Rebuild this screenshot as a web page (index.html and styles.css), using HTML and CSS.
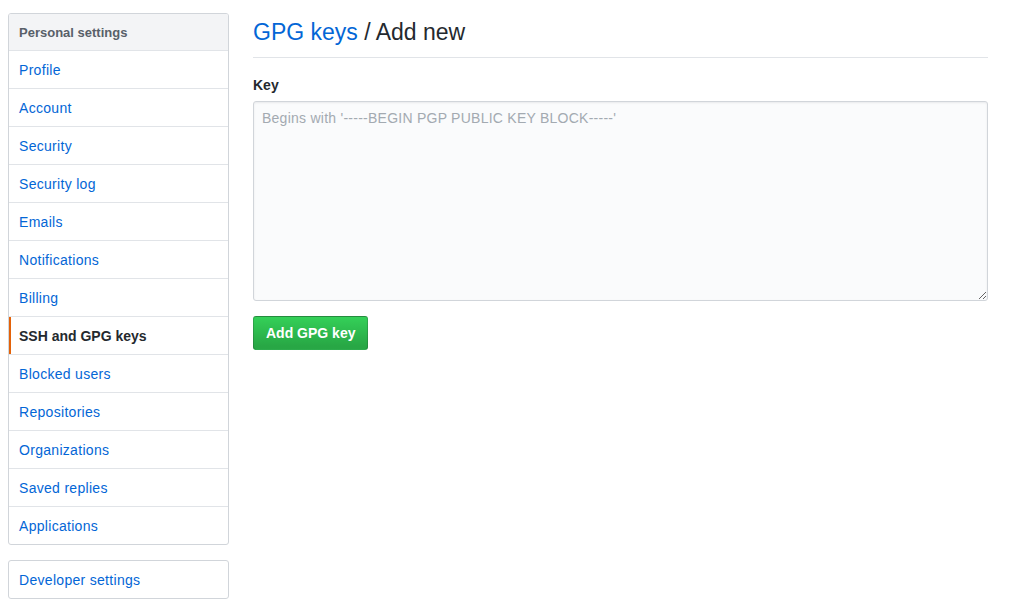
FILE: index.html
```html
<!DOCTYPE html>
<html lang="en">
<head>
<meta charset="utf-8">
<title>GPG keys / Add new</title>
<link rel="stylesheet" href="styles.css">
</head>
<body>
<div class="layout">
  <nav class="sidebar">
    <div class="menu">
      <div class="menu-heading">Personal settings</div>
      <a class="menu-item" href="#">Profile</a>
      <a class="menu-item" href="#">Account</a>
      <a class="menu-item" href="#">Security</a>
      <a class="menu-item" href="#">Security log</a>
      <a class="menu-item" href="#">Emails</a>
      <a class="menu-item" href="#">Notifications</a>
      <a class="menu-item" href="#">Billing</a>
      <a class="menu-item selected" href="#">SSH and GPG keys</a>
      <a class="menu-item" href="#">Blocked users</a>
      <a class="menu-item" href="#">Repositories</a>
      <a class="menu-item" href="#">Organizations</a>
      <a class="menu-item" href="#">Saved replies</a>
      <a class="menu-item" href="#">Applications</a>
    </div>
    <div class="menu">
      <a class="menu-item" href="#">Developer settings</a>
    </div>
  </nav>
  <main class="main">
    <div class="subhead">
      <h2 class="subhead-heading"><a href="#">GPG keys</a> / Add new</h2>
    </div>
    <form class="form">
      <label class="label" for="key">Key</label>
      <textarea id="key" class="key-input" placeholder="Begins with '-----BEGIN PGP PUBLIC KEY BLOCK-----'"></textarea>
      <div class="actions">
        <button type="button" class="btn-primary">Add GPG key</button>
      </div>
    </form>
  </main>
</div>
</body>
</html>
```
FILE: styles.css
```css
* { box-sizing: border-box; }
html, body { margin: 0; background: #fff; }
body {
  font-family: "Liberation Sans", Arial, Helvetica, sans-serif;
  font-size: 14px;
  line-height: 1.5;
  color: #24292e;
}
a { color: #0366d6; text-decoration: none; }

.layout {
  display: flex;
  align-items: flex-start;
  gap: 24px;
  padding: 13px 29px 0 8px;
}

.sidebar {
  width: 221px;
  flex: 0 0 221px;
  display: flex;
  flex-direction: column;
  gap: 15px;
}

.menu {
  border: 1px solid #d1d5da;
  border-radius: 3px;
  background: #fff;
  overflow: hidden;
}

.menu-heading {
  display: block;
  height: 37px;
  padding: 8px 10px;
  font-size: 13px;
  font-weight: 700;
  line-height: 21px;
  color: #586069;
  background: #f3f4f6;
  border-bottom: 1px solid #e1e4e8;
}

.menu-item {
  display: block;
  height: 38px;
  padding: 9px 10px 7px;
  line-height: 21px;
  letter-spacing: 0.3px;
  border-bottom: 1px solid #e1e4e8;
  position: relative;
}
.menu-item:last-child { border-bottom: 0; height: 37px; }
.menu-item.selected {
  color: #24292e;
  font-weight: 700;
  letter-spacing: 0;
  cursor: default;
}
.menu-item.selected::before {
  content: "";
  position: absolute;
  top: 0;
  bottom: 0;
  left: 0;
  width: 2px;
  background: #e36209;
}

.main {
  flex: 1 1 auto;
  min-width: 0;
}

.subhead {
  border-bottom: 1px solid #e1e4e8;
  margin-bottom: 16px;
  padding-top: 1px;
  padding-bottom: 7px;
}
.subhead-heading {
  margin: 0;
  font-size: 23px;
  font-weight: 400;
  line-height: 36px;
  color: #24292e;
}

.form { display: flex; flex-direction: column; }

.label {
  font-weight: 700;
  font-size: 14px;
  line-height: 21px;
  padding-top: 1px;
  margin: 0 0 5px;
}

.key-input {
  display: block;
  width: 100%;
  height: 200px;
  padding: 6px 8px;
  font-family: inherit;
  font-size: 14px;
  line-height: 20px;
  color: #24292e;
  background: #fafbfc;
  border: 1px solid #d1d5da;
  border-radius: 3px;
  box-shadow: inset 0 1px 2px rgba(27,31,35,0.075);
  resize: vertical;
  outline: none;
}
.key-input::placeholder { color: #a3aab1; letter-spacing: 0.25px; }

.actions { margin-top: 15px; }

.btn-primary {
  height: 34px;
  padding: 6px 12px;
  font-family: inherit;
  font-size: 14px;
  font-weight: 700;
  line-height: 20px;
  color: #fff;
  background-image: linear-gradient(-180deg, #34d058 0%, #28a745 90%);
  background-color: #28a745;
  border: 1px solid rgba(27,31,35,0.2);
  border-radius: 3px;
  cursor: pointer;
}
```
